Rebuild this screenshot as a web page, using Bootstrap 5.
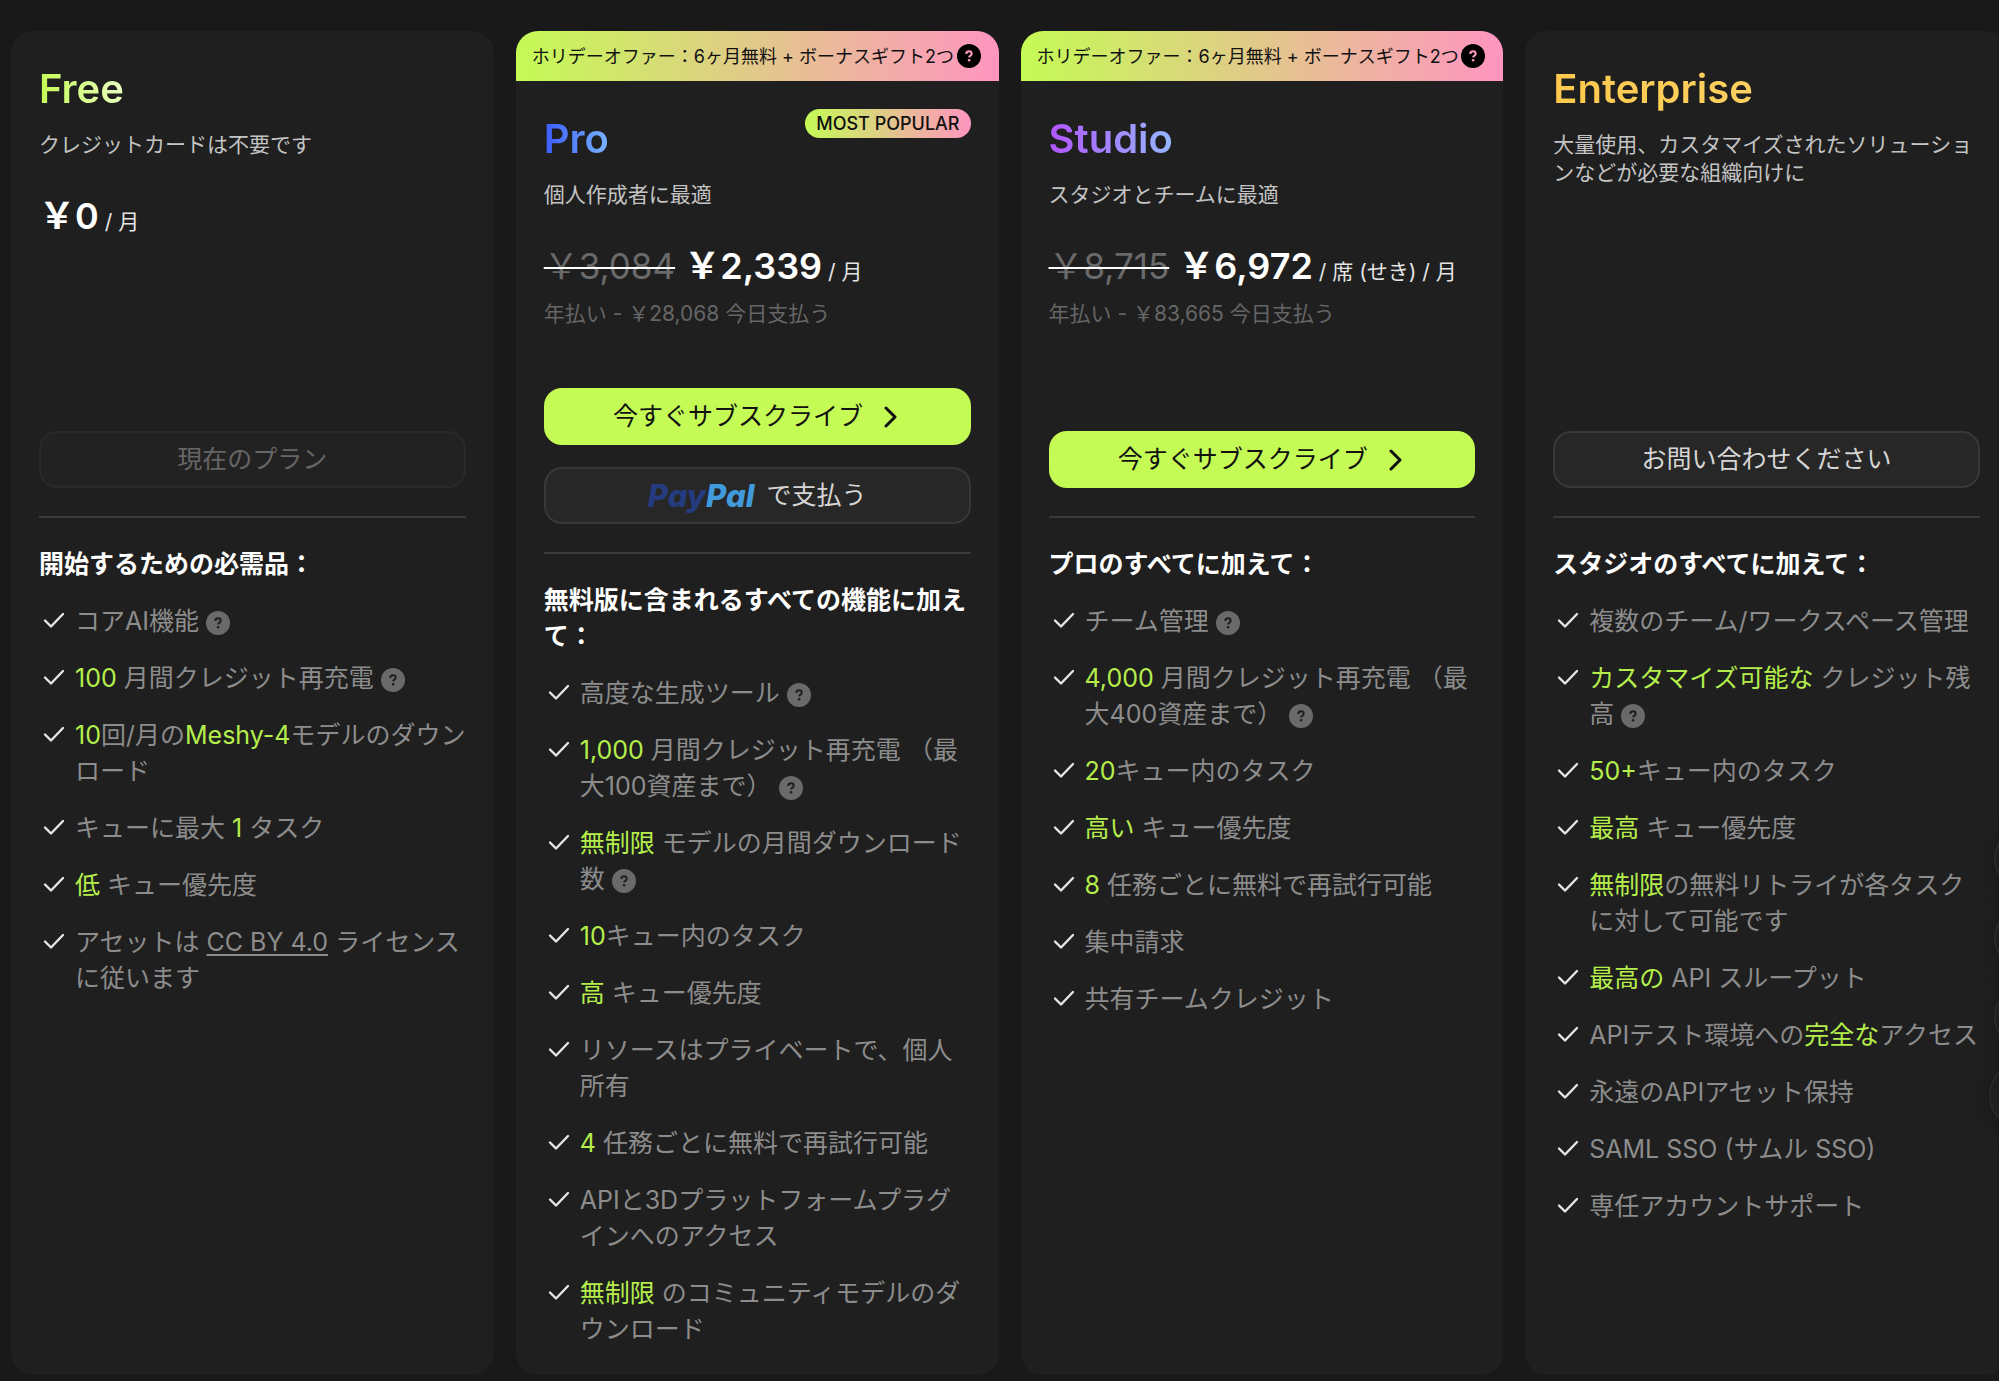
<!DOCTYPE html>
<html lang="ja">
<head>
<meta charset="utf-8">
<meta name="viewport" content="width=device-width, initial-scale=1">
<title>料金プラン</title>
<link href="https://cdn.jsdelivr.net/npm/bootstrap@5.3.0/dist/css/bootstrap.min.css" rel="stylesheet">
<style>
  :root { --lime: #c5fb55; --offer: linear-gradient(90deg, #c5fb55, #ff95c0); }
  body { background: #191919; color: #fff; font-family: Inter, "Noto Sans CJK JP", sans-serif; overflow-x: hidden; }
  .stage { overflow: hidden; }
  .pricing { padding: 31px 0 8px 11px; margin-right: -9px; gap: 22px; }
  .plan { flex: 1 1 0; min-width: 0; background: #1f1f1f; border-radius: 22px; overflow: hidden; }
  .plan-top { min-height: 485px; }
  .plan-head { padding: 28px; }
  .offer { height: 50px; padding: 0 18px 0 16px; background: var(--offer); color: #111; font-size: 18px; }
  .plan-name { font-size: 40px; line-height: 60px; font-weight: 600; margin: 0 0 12px; background-clip: text; -webkit-background-clip: text; color: transparent; }
  .name-free { background-image: linear-gradient(90deg, #c5fb55, #e9ffc0); }
  .name-pro { background-image: linear-gradient(90deg, #3b5cff, #78b4ff); }
  .name-studio { background-image: linear-gradient(90deg, #b155ff, #94b8ff); }
  .name-ent { background-image: linear-gradient(90deg, #ffc94d, #fbd060); }
  .popular { height: 29px; padding: 0 11px; border-radius: 15px; background: var(--offer); color: #111; font-size: 18px; font-weight: 500; }
  .plan-desc { font-size: 21px; line-height: 28px; color: #c4c4c4; margin: 0 0 32px; }
  .price { font-size: 36px; line-height: 50px; font-weight: 600; margin: 0 0 3px; }
  .price del { font-size: 35px; font-weight: 400; color: #6a6a6a; text-decoration: line-through 2px #fff; }
  .per { font-size: 21px; font-weight: 400; color: #e4e4e4; }
  .billing { font-size: 21px; line-height: 28px; color: #666; margin: 0; }
  .actions { gap: 22px; }
  .actions-double { padding-top: 60px; }
  .btn-plan { height: 57px; border-radius: 18px; font-size: 25px; line-height: 35px; padding: 0 16px; }
  .btn-lime, .btn-lime:hover { background: var(--lime); color: #111; }
  .btn-ghost, .btn-ghost:hover { background: #272727; border: 2px solid #383838; color: #d6d6d6; }
  .btn-ghost:disabled { background: #222; border-color: #292929; color: #666; opacity: 1; }
  .chevron { width: 18px; height: 22px; margin-left: 20px; }
  .paypal { font-style: italic; font-weight: 800; font-size: 31px; color: #253b80; margin-right: 12px; }
  .paypal span { color: #419bdb; }
  .plan-body { margin: 0 28px; padding: 28px 0; border-top: 2px solid #3a3a3a; }
  .plan-body h3 { font-size: 25px; line-height: 36px; font-weight: 600; margin: 0 0 21px; }
  .features { gap: 21px; color: #8c8c8c; font-size: 25px; line-height: 36px; }
  .features li { gap: 8px; }
  .features b { color: #b5ee4b; font-weight: 400; }
  .features a { color: #8c8c8c; text-underline-offset: 3px; }
  .tick { flex: none; width: 28px; height: 35px; }
  .help { width: 24px; height: 24px; vertical-align: -5px; }
  .float-tools { position: absolute; top: 827px; right: -59px; gap: 15px; }
  .float-tools button { width: 64px; height: 64px; background: #1e1e1e; border: 2px solid #282828; box-shadow: 0 4px 24px rgba(0,0,0,.3); }
  .float-tools button:last-child { width: 69px; height: 69px; margin: -3px 0 0 -5px; }
</style>
</head>
<body>
<svg class="d-none" aria-hidden="true">
  <symbol id="tick" viewBox="0 0 28 35"><path d="M6 17.500l6 6L24 11" fill="none" stroke="#e6e6e6" stroke-width="2.400" stroke-linecap="round" stroke-linejoin="round"/></symbol>
  <symbol id="help" viewBox="0 0 24 24"><circle cx="12" cy="12" r="12" fill="#6a6a6a"/><path d="M9.300 10c0-1.700 1.100-2.700 2.700-2.700s2.700 1 2.700 2.400c0 1.900-2.500 1.900-2.500 3.700" fill="none" stroke="#1f1f1f" stroke-width="2"/><circle cx="12.100" cy="16.200" r="1.300" fill="#1f1f1f"/></symbol>
  <symbol id="help-dark" viewBox="0 0 24 24"><circle cx="12" cy="12" r="12" fill="#000"/><path d="M9.300 10c0-1.700 1.100-2.700 2.700-2.700s2.700 1 2.700 2.400c0 1.900-2.500 1.900-2.500 3.700" fill="none" stroke="#ff9dbd" stroke-width="2"/><circle cx="12.100" cy="16.200" r="1.300" fill="#ff9dbd"/></symbol>
  <symbol id="next" viewBox="0 0 18 22"><path d="M3 2l9 9-9 9" fill="none" stroke="#111" stroke-width="3" stroke-linecap="round" stroke-linejoin="round"/></symbol>
</svg>
<div class="stage position-relative">
<main class="pricing d-flex">

  <section class="plan d-flex flex-column">
    <div class="plan-top d-flex flex-column">
      <div class="plan-head d-flex flex-column flex-grow-1">
        <div class="d-flex"><h2 class="plan-name name-free">Free</h2></div>
        <p class="plan-desc">クレジットカードは不要です</p>
        <p class="price">￥0<span class="per"> / 月</span></p>
        <div class="actions d-grid mt-auto"><button class="btn btn-plan btn-ghost" disabled>現在のプラン</button></div>
      </div>
    </div>
    <div class="plan-body">
      <h3>開始するための必需品：</h3>
      <ul class="features list-unstyled d-flex flex-column m-0">
        <li class="d-flex"><svg class="tick"><use href="#tick"/></svg><span>コアAI機能 <svg class="help"><use href="#help"/></svg></span></li>
        <li class="d-flex"><svg class="tick"><use href="#tick"/></svg><span><b>100</b> 月間クレジット再充電 <svg class="help"><use href="#help"/></svg></span></li>
        <li class="d-flex"><svg class="tick"><use href="#tick"/></svg><span><b>10</b>回/月の<b>Meshy-4</b>モデルのダウンロード</span></li>
        <li class="d-flex"><svg class="tick"><use href="#tick"/></svg><span>キューに最大 <b>1</b> タスク</span></li>
        <li class="d-flex"><svg class="tick"><use href="#tick"/></svg><span><b>低</b> キュー優先度</span></li>
        <li class="d-flex"><svg class="tick"><use href="#tick"/></svg><span>アセットは <a href="#">CC BY 4.0</a> ライセンスに従います</span></li>
      </ul>
    </div>
  </section>

  <section class="plan d-flex flex-column">
    <div class="plan-top d-flex flex-column">
      <div class="offer d-flex align-items-center justify-content-between"><span class="text-nowrap">ホリデーオファー：6ヶ月無料 + ボーナスギフト2つ</span><svg class="help"><use href="#help-dark"/></svg></div>
      <div class="plan-head d-flex flex-column flex-grow-1">
        <div class="d-flex justify-content-between align-items-start"><h2 class="plan-name name-pro">Pro</h2><span class="popular d-flex align-items-center">MOST POPULAR</span></div>
        <p class="plan-desc">個人作成者に最適</p>
        <p class="price"><del>￥3,084</del> ￥2,339<span class="per"> / 月</span></p>
        <p class="billing">年払い - ￥28,068 今日支払う</p>
        <div class="actions actions-double d-grid mt-auto">
          <button class="btn btn-plan btn-lime d-flex align-items-center justify-content-center">今すぐサブスクライブ<svg class="chevron"><use href="#next"/></svg></button>
          <button class="btn btn-plan btn-ghost d-flex align-items-center justify-content-center"><span class="paypal">Pay<span>Pal</span></span>で支払う</button>
        </div>
      </div>
    </div>
    <div class="plan-body">
      <h3>無料版に含まれるすべての機能に加えて：</h3>
      <ul class="features list-unstyled d-flex flex-column m-0">
        <li class="d-flex"><svg class="tick"><use href="#tick"/></svg><span>高度な生成ツール <svg class="help"><use href="#help"/></svg></span></li>
        <li class="d-flex"><svg class="tick"><use href="#tick"/></svg><span><b>1,000</b> 月間クレジット再充電 （最大100資産まで） <svg class="help"><use href="#help"/></svg></span></li>
        <li class="d-flex"><svg class="tick"><use href="#tick"/></svg><span><b>無制限</b> モデルの月間ダウンロード数 <svg class="help"><use href="#help"/></svg></span></li>
        <li class="d-flex"><svg class="tick"><use href="#tick"/></svg><span><b>10</b>キュー内のタスク</span></li>
        <li class="d-flex"><svg class="tick"><use href="#tick"/></svg><span><b>高</b> キュー優先度</span></li>
        <li class="d-flex"><svg class="tick"><use href="#tick"/></svg><span>リソースはプライベートで、個人所有</span></li>
        <li class="d-flex"><svg class="tick"><use href="#tick"/></svg><span><b>4</b> 任務ごとに無料で再試行可能</span></li>
        <li class="d-flex"><svg class="tick"><use href="#tick"/></svg><span>APIと3Dプラットフォームプラグインへのアクセス</span></li>
        <li class="d-flex"><svg class="tick"><use href="#tick"/></svg><span><b>無制限</b> のコミュニティモデルのダウンロード</span></li>
      </ul>
    </div>
  </section>

  <section class="plan d-flex flex-column">
    <div class="plan-top d-flex flex-column">
      <div class="offer d-flex align-items-center justify-content-between"><span class="text-nowrap">ホリデーオファー：6ヶ月無料 + ボーナスギフト2つ</span><svg class="help"><use href="#help-dark"/></svg></div>
      <div class="plan-head d-flex flex-column flex-grow-1">
        <div class="d-flex"><h2 class="plan-name name-studio">Studio</h2></div>
        <p class="plan-desc">スタジオとチームに最適</p>
        <p class="price"><del>￥8,715</del> ￥6,972<span class="per"> / 席 (せき) / 月</span></p>
        <p class="billing">年払い - ￥83,665 今日支払う</p>
        <div class="actions d-grid mt-auto"><button class="btn btn-plan btn-lime d-flex align-items-center justify-content-center">今すぐサブスクライブ<svg class="chevron"><use href="#next"/></svg></button></div>
      </div>
    </div>
    <div class="plan-body">
      <h3>プロのすべてに加えて：</h3>
      <ul class="features list-unstyled d-flex flex-column m-0">
        <li class="d-flex"><svg class="tick"><use href="#tick"/></svg><span>チーム管理 <svg class="help"><use href="#help"/></svg></span></li>
        <li class="d-flex"><svg class="tick"><use href="#tick"/></svg><span><b>4,000</b> 月間クレジット再充電 （最大400資産まで） <svg class="help"><use href="#help"/></svg></span></li>
        <li class="d-flex"><svg class="tick"><use href="#tick"/></svg><span><b>20</b>キュー内のタスク</span></li>
        <li class="d-flex"><svg class="tick"><use href="#tick"/></svg><span><b>高い</b> キュー優先度</span></li>
        <li class="d-flex"><svg class="tick"><use href="#tick"/></svg><span><b>8</b> 任務ごとに無料で再試行可能</span></li>
        <li class="d-flex"><svg class="tick"><use href="#tick"/></svg><span>集中請求</span></li>
        <li class="d-flex"><svg class="tick"><use href="#tick"/></svg><span>共有チームクレジット</span></li>
      </ul>
    </div>
  </section>

  <section class="plan d-flex flex-column">
    <div class="plan-top d-flex flex-column">
      <div class="plan-head d-flex flex-column flex-grow-1">
        <div class="d-flex"><h2 class="plan-name name-ent">Enterprise</h2></div>
        <p class="plan-desc">大量使用、カスタマイズされたソリューションなどが必要な組織向けに</p>
        <div class="actions d-grid mt-auto"><button class="btn btn-plan btn-ghost">お問い合わせください</button></div>
      </div>
    </div>
    <div class="plan-body">
      <h3>スタジオのすべてに加えて：</h3>
      <ul class="features list-unstyled d-flex flex-column m-0">
        <li class="d-flex"><svg class="tick"><use href="#tick"/></svg><span>複数のチーム/ワークスペース管理</span></li>
        <li class="d-flex"><svg class="tick"><use href="#tick"/></svg><span><b>カスタマイズ可能な</b> クレジット残高 <svg class="help"><use href="#help"/></svg></span></li>
        <li class="d-flex"><svg class="tick"><use href="#tick"/></svg><span><b>50+</b>キュー内のタスク</span></li>
        <li class="d-flex"><svg class="tick"><use href="#tick"/></svg><span><b>最高</b> キュー優先度</span></li>
        <li class="d-flex"><svg class="tick"><use href="#tick"/></svg><span><b>無制限</b>の無料リトライが各タスクに対して可能です</span></li>
        <li class="d-flex"><svg class="tick"><use href="#tick"/></svg><span><b>最高の</b> API スループット</span></li>
        <li class="d-flex"><svg class="tick"><use href="#tick"/></svg><span>APIテスト環境への<b>完全な</b>アクセス</span></li>
        <li class="d-flex"><svg class="tick"><use href="#tick"/></svg><span>永遠のAPIアセット保持</span></li>
        <li class="d-flex"><svg class="tick"><use href="#tick"/></svg><span>SAML SSO (サムル SSO)</span></li>
        <li class="d-flex"><svg class="tick"><use href="#tick"/></svg><span>専任アカウントサポート</span></li>
      </ul>
    </div>
  </section>
</main>
<div class="float-tools d-flex flex-column">
  <button class="rounded-circle" aria-label="共有"></button>
  <button class="rounded-circle" aria-label="コミュニティ"></button>
  <button class="rounded-circle" aria-label="フィードバック"></button>
  <button class="rounded-circle" aria-label="チャット"></button>
</div>
</div>
<script src="https://cdn.jsdelivr.net/npm/bootstrap@5.3.0/dist/js/bootstrap.bundle.min.js"></script>
</body>
</html>
